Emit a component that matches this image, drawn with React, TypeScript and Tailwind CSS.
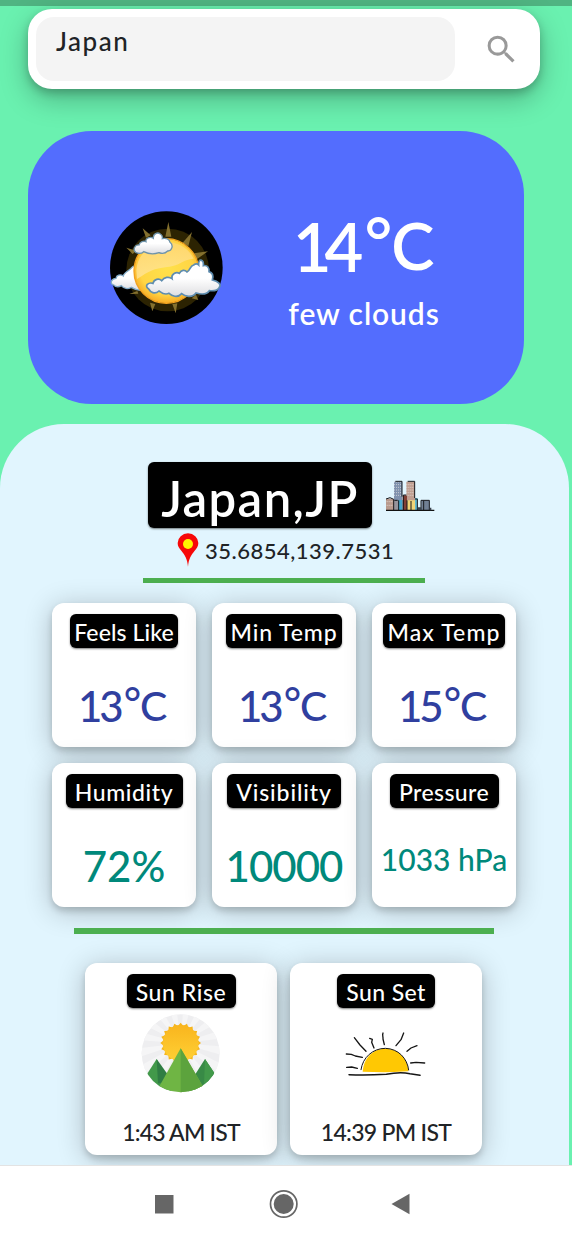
import React from "react";

type Metric = { label: string; box: string; labelCls: string; value: string; unit?: string; valueCls: string };

const metrics: Metric[] = [
  { label: "Feels Like", box: "w-[108px]", labelCls: "tracking-[0.1px]", value: "13", unit: "C", valueCls: "text-[42px] pt-[37px] text-[#303f9f]" },
  { label: "Min Temp", box: "w-[116px]", labelCls: "tracking-[0.9px]", value: "13", unit: "C", valueCls: "text-[42px] pt-[37px] text-[#303f9f]" },
  { label: "Max Temp", box: "w-[122px]", labelCls: "tracking-[1.1px]", value: "15", unit: "C", valueCls: "text-[42px] pt-[37px] text-[#303f9f]" },
  { label: "Humidity", box: "w-[117px]", labelCls: "tracking-[0.6px]", value: "72%", valueCls: "text-[42px] pt-[37px] text-[#00897b]" },
  { label: "Visibility", box: "w-[114px]", labelCls: "tracking-[0.9px]", value: "10000", valueCls: "text-[42px] pt-[37px] tracking-[-1px] text-[#00897b]" },
  { label: "Pressure", box: "w-[109px]", labelCls: "tracking-[0.4px]", value: "1033 hPa", valueCls: "text-[30px] pt-[36px] text-[#00897b]" },
];

const cardCls =
  "flex flex-col items-center rounded-[12px] bg-white pt-[11px] shadow-[0_4px_6px_rgba(0,0,0,0.16),0_4px_28px_rgba(0,0,0,0.24)]";

function Label({ text, box, cls }: { text: string; box: string; cls: string }) {
  return (
    <div className={`${box} h-[34px] shrink-0 rounded-[6px] bg-black pt-[7px] text-center text-[23px] leading-none font-medium whitespace-nowrap text-white shadow-[0_1px_2px_rgba(0,0,0,0.5)]`}>
      <span className={cls}>{text}</span>
    </div>
  );
}

function PartlyCloudy() {
  return (
    <svg className="h-[120px] w-[120px]" viewBox="45 51 360 360">
      <defs>
        <radialGradient id="sun" cx="0.5" cy="0.45" r="0.55">
          <stop offset="0" stopColor="#ffe14a" />
          <stop offset="0.75" stopColor="#ffd545" />
          <stop offset="1" stopColor="#f7ab24" />
        </radialGradient>
        <linearGradient id="shine" x1="0" y1="0" x2="0" y2="1">
          <stop offset="0" stopColor="#ffd777" />
          <stop offset="1" stopColor="#ffe6a0" />
        </linearGradient>
        <linearGradient id="cloud" x1="0" y1="0" x2="0" y2="1">
          <stop offset="0.5" stopColor="#ffffff" />
          <stop offset="1" stopColor="#dedee1" />
        </linearGradient>
      </defs>
      <circle cx="229" cy="233" r="169" fill="#000" />
      <circle cx="233" cy="240" r="124" fill="#2c2302" />
      <g fill="#84702e">
        <path d="M226 140 235 96 244 140ZM278 158 306 126 295 169ZM312 190 354 184 320 208ZM158 115 182 136 168 143ZM109 173 139 182 128 192ZM180 338 187 364 196 342ZM247 342 257 370 262 340ZM118 312 142 303 145 311ZM305 325 325 330 318 314Z" />
      </g>
      <path d="M71 285C58 280 64 266 78 265C79 255 91 252 100 258C101 248 116 243 123 235C132 222 145 228 150 240L160 300C142 303 132 297 124 292C110 300 99 293 94 287C85 292 76 290 71 285Z" fill="url(#cloud)" stroke="#7fa9c7" strokeWidth="4" />
      <circle cx="229" cy="243" r="97" fill="url(#sun)" stroke="#f2a21f" strokeWidth="4" />
      <path d="M139 241A91 91 0 0 1 311 206C270 211 275 226 231 231C190 236 180 242 141 267Z" fill="url(#shine)" opacity=".75" />
      <path d="M137 187C127 179 135 163 147 165C150 155 161 152 168 155C165 145 181 138 190 145C189 130 203 126 211 132C217 136 218 141 217 146C228 143 239 148 240 157C252 166 245 184 233 183C223 194 213 190 207 188C190 194 171 190 161 185C151 194 143 190 137 187Z" fill="url(#cloud)" stroke="#6f94ab" strokeWidth="4" />
      <path d="M176 297C161 287 176 276 189 280C192 267 207 264 215 272C223 261 237 259 246 266C243 252 259 244 268 250C274 239 285 239 291 246C302 241 299 228 311 225C318 220 323 222 326 225C324 203 342 207 340 227C352 224 359 235 357 245C370 249 370 260 367 270C385 274 395 283 388 292C382 305 366 302 358 302C347 318 325 311 318 309C307 325 284 319 275 311C262 326 245 317 237 310C222 317 212 306 207 303C194 315 181 306 176 297Z" fill="url(#cloud)" stroke="#5f8daf" strokeWidth="5" />
    </svg>
  );
}

function City() {
  return (
    <svg className="h-[35px] w-[52px] shrink-0" viewBox="762 84 156 105">
      <path d="M768 146h24v34h-24z" fill="#b89a8d" />
      <path d="M792 95h24v56h-24z" fill="#7f91ad" />
      <path d="M829 95h26v58h-26z" fill="#bf9e91" />
      <path d="M792 150h14v30h-14z" fill="#96949c" />
      <path d="M804 150h14v30h-14z" fill="#45a6cb" />
      <path d="M818 136h13v44h-13z" fill="#823f34" />
      <path d="M831 151h24v29h-24z" fill="#f1d477" />
      <path d="M855 144h8v36h-8z" fill="#62b9cf" />
      <path d="M874 151h24v29h-24z" fill="#718094" />
      <path d="M792 96h24M792 104h24M792 112h24M792 120h24M792 128h24M792 136h24M829 104h26M829 112h26M829 120h26M829 128h26M829 136h26M770 155h20M770 166h20" stroke="#f0ece9" strokeWidth="2" strokeDasharray="3 3" />
      <path d="M796 94h20v46M833 94h21v50M820 180v-45h9M768 147l12-4 11 5v32M855 147h7v33M873 180v-29h25v29M881 152v28M831 151v29M843 153v27M806 151v29M793 151h10" fill="none" stroke="#17191e" strokeWidth="3" />
      <path d="M768 181h143v2" fill="none" stroke="#111" strokeWidth="4" />
      <path d="M864 172h10v8h-10zM899 173h5v8h-5z" fill="#39434e" />
    </svg>
  );
}

function Pin() {
  return (
    <svg className="h-[36px] w-[24px] shrink-0" viewBox="138 246 72 108">
      <path d="M174 350C172 326 165 316 154 302C147 293 143 289 143 279A31 29 0 0 1 205 279C205 289 200 295 194 302C183 316 176 326 174 350Z" fill="#f60808" />
      <circle cx="174" cy="282" r="15" fill="#fff500" />
    </svg>
  );
}

function SunRise() {
  const rays = Array.from({ length: 16 }, (_, i) => i * 22.5);
  const teeth = Array.from({ length: 20 }, (_, i) => i * 18);
  return (
    <svg className="h-[81px] w-[82px]" viewBox="198 189 246 243">
      <defs>
        <clipPath id="disc"><circle cx="320" cy="310" r="117" /></clipPath>
        <linearGradient id="gold" x1="0" y1="0" x2="0" y2="1"><stop stopColor="#f9b51e" /><stop offset="1" stopColor="#ffd034" /></linearGradient>
      </defs>
      <g clipPath="url(#disc)">
        <path d="M198 189h246v243H198z" fill="#eeeef0" />
        {rays.map((a) => <path key={a} d="M320 280 304 120H336Z" fill="#f5f5f6" transform={`rotate(${a + 10} 320 280)`} />)}
        {teeth.map((a) => <path key={a} d="M310 230 320 218 330 230Z" fill="#f5b51d" transform={`rotate(${a} 320 279)`} />)}
        <circle cx="320" cy="279" r="54" fill="url(#gold)" />
        <path d="M248 327 195 410V440H300Z" fill="#42994a" />
        <path d="M248 327 252 400H300Z" fill="#2f7d43" />
        <path d="M393 327 340 410 345 440H445V405Z" fill="#388a46" />
        <path d="M393 327 389 430H445V405Z" fill="#42994a" />
        <path d="M320 295 243 432H400Z" fill="#6fb544" />
        <path d="M320 295V432H400Z" fill="#5ca33d" />
      </g>
    </svg>
  );
}

function SunSet() {
  return (
    <svg className="h-[48px] w-[82px]" viewBox="183 240 246 144">
      <path d="M236 365C239 325 264 297 303 296C342 296 370 323 373 364L330 366 300 367Z" fill="#ffc803" />
      <g fill="none" stroke="#151515" strokeLinecap="round" strokeLinejoin="round">
        <path d="M231 359C236 322 267 295 304 295C343 296 370 325 374 360" strokeWidth="3" />
        <path d="M195 374C230 376 270 375 307 373C330 368 360 367 378 371L408 376" strokeWidth="4.5" />
        <path d="M211 263 228 285 246 304M257 265l8 3-2 9 7 17M297 249c-3 7 1 12 0 18l4 17M359 249l-8 20-15 18M369 304l12-10 18-7M380 339l16-2 26 2M187 312l15 1 12 5 21 4M188 352l15-1 17 4" strokeWidth="4" />
      </g>
    </svg>
  );
}

export default function App() {
  return (
    <div className="flex h-[1242px] w-[572px] flex-col overflow-hidden bg-[#6af1b0] font-['Lato',sans-serif] text-[#202326]">
      <div className="h-[6px] shrink-0 bg-[#50b482]" />
      <div className="mt-[3px] ml-[28px] flex h-[80px] w-[512px] shrink-0 items-start rounded-[24px] bg-white pt-[8px] pl-[8px] shadow-[0_4px_8px_rgba(0,0,0,0.2),0_10px_28px_rgba(0,0,0,0.26)]">
        <div className="h-[64px] w-[419px] rounded-[18px] bg-[#f4f4f4] pt-[11px] pl-[20px] text-[26px] leading-none font-medium">
          <span className="tracking-[1.5px]">Japan</span>
        </div>
        <svg className="mt-[14px] ml-[28px] h-[37px] w-[37px]" viewBox="0 0 24 24" fill="#999">
          <path d="M15.5 14h-.79l-.28-.27A6.47 6.47 0 0 0 16 9.5 6.5 6.5 0 1 0 9.5 16c1.61 0 3.09-.59 4.23-1.57l.27.28v.79l5 4.99L20.49 19l-4.99-5zm-6 0C7.01 14 5 11.99 5 9.5S7.01 5 9.5 5 14 7.01 14 9.5 11.99 14 9.5 14z" />
        </svg>
      </div>

      <section className="mt-[42px] ml-[28px] flex h-[273px] w-[496px] shrink-0 rounded-[64px] bg-[#536dfe] text-white">
        <div className="mt-[76px] ml-[77px]"><PartlyCloudy /></div>
        <div className="ml-[24px] flex w-[230px] flex-col items-center pt-[82px] leading-none">
          <div className="flex text-[67px] font-semibold whitespace-nowrap">
            <span className="tracking-[-7px]">14</span>
            <span className="-mt-[6px] ml-[8px]">°</span>
            <span className="-ml-[1px] w-[44px] text-[65px]">C</span>
          </div>
          <div className="mt-[18px] text-[30px] font-semibold whitespace-nowrap"><span className="tracking-[0.9px]">few clouds</span></div>
        </div>
      </section>

      <main className="mt-[20px] flex h-[741px] w-[569px] shrink-0 flex-col overflow-hidden rounded-t-[64px] bg-[#e1f5fe]">
        <div className="mt-[38px] ml-[148px] flex h-[66px] shrink-0">
          <h1 className="w-[224px] shrink-0 rounded-[6px] bg-black pt-[12px] text-center text-[49px] leading-none font-semibold whitespace-nowrap text-white shadow-[0_1px_2px_rgba(0,0,0,0.5)]">
            <span className="tracking-[1.4px]">Japan,JP</span>
          </h1>
          <div className="mt-[16px] ml-[12px]"><City /></div>
        </div>
        <div className="mt-[4px] ml-[176px] flex h-[46px] shrink-0">
          <Pin />
          <span className="ml-[5px] pt-[8px] text-[22px] leading-none font-medium tracking-[0.5px] whitespace-nowrap">35.6854,139.7531</span>
        </div>
        <div className="ml-[143px] h-[5px] w-[282px] shrink-0 bg-[#4caf50]" />

        <div className="mt-[20px] ml-[52px] grid w-[464px] shrink-0 grid-cols-3 gap-[16px]">
          {metrics.map((m) => (
            <div key={m.label} className={`${cardCls} h-[144px]`}>
              <Label text={m.label} box={m.box} cls={m.labelCls} />
              <div className={`${m.valueCls} flex leading-none font-medium whitespace-pre`}>
                {m.unit ? (
                  <>
                    <span className="tracking-[-3px]">{m.value}</span>
                    <span className="-mt-[4px] ml-[3px]">°</span>
                    <span className="-ml-[1px] w-[30px] text-[41px]">{m.unit}</span>
                  </>
                ) : (
                  m.value
                )}
              </div>
            </div>
          ))}
        </div>

        <div className="mt-[21px] ml-[74px] h-[6px] w-[420px] shrink-0 bg-[#4caf50]" />

        <div className="mt-[29px] ml-[85px] flex shrink-0 gap-[13px]">
          <div className={`${cardCls} h-[192px] w-[192px]`}>
            <Label text="Sun Rise" box="w-[109px]" cls="tracking-[0.6px]" />
            <div className="mt-[5px] h-[108px]"><SunRise /></div>
            <div className="text-[23px] leading-none font-medium whitespace-nowrap"><span className="tracking-[-0.8px]">1:43 AM IST</span></div>
          </div>
          <div className={`${cardCls} h-[192px] w-[192px]`}>
            <Label text="Sun Set" box="w-[98px]" cls="tracking-[0.4px]" />
            <div className="mt-[22px] h-[91px]"><SunSet /></div>
            <div className="text-[23px] leading-none font-medium whitespace-nowrap"><span className="tracking-[-0.7px]">14:39 PM IST</span></div>
          </div>
        </div>
      </main>

      <nav className="flex h-[77px] shrink-0 items-start border-t border-[#e3e3e3] bg-white pt-[23px] pl-[150px]">
        <svg className="h-[30px] w-[28px]" viewBox="0 0 28 30"><path d="M5 6h18.5V24.5H5z" fill="#666" /></svg>
        <svg className="ml-[91px] h-[30px] w-[30px]" viewBox="0 0 30 30">
          <circle cx="14.7" cy="15" r="13.2" fill="none" stroke="#666" strokeWidth="1.7" />
          <circle cx="14.7" cy="15" r="10" fill="#666" />
        </svg>
        <svg className="ml-[91px] h-[30px] w-[22px]" viewBox="0 0 22 30"><path d="M1.5 15 19.5 4.8V25.3Z" fill="#666" /></svg>
      </nav>
    </div>
  );
}
